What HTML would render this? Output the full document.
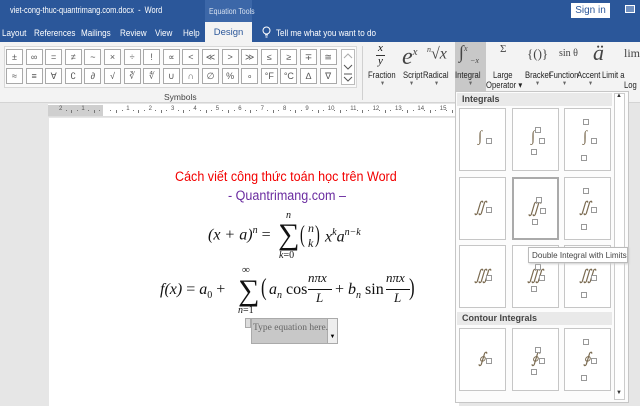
<!DOCTYPE html>
<html><head><meta charset="utf-8"><style>
*{margin:0;padding:0;box-sizing:border-box}
body{width:640px;height:406px;overflow:hidden;position:relative;font-family:"Liberation Sans",sans-serif;background:#e6e6e6}
.a{position:absolute;white-space:nowrap}
.n{transform:scaleX(.82);transform-origin:left top}
.sb{position:absolute;width:17px;height:16px;background:#fff;border:1px solid #a9a9a9;font-size:9px;color:#555;text-align:center;line-height:14px}
.m{font-family:"Liberation Serif","DejaVu Serif",serif;font-style:italic;color:#111;position:absolute;white-space:nowrap}
.r{font-style:normal}
.tile{position:absolute;width:47px;height:63px;background:#fff;border:1px solid #c6c6c6}
.tile span{position:absolute;font-family:"Liberation Serif",serif;font-style:italic;color:#7a6a50;font-size:15px}
.bx{position:absolute;width:6px;height:6px;border:1px solid #999;background:#fff}
.rb{position:absolute;font-size:9px;color:#222;white-space:nowrap;transform:scaleX(.85);transform-origin:left top}
.tb{position:absolute;top:28px;font-size:9px;color:#fff;transform:scaleX(.9);transform-origin:left top}
</style></head><body>
<div class="a" style="left:0;top:0;width:640px;height:42px;background:#2b579a"></div>
<div class="a" style="left:205px;top:0;width:47px;height:22px;background:#3c67a8"></div>
<div class="a n" style="left:10px;top:5px;font-size:9.5px;color:#fff;transform:scaleX(.78)">viet-cong-thuc-quantrimang.com.docx &nbsp;-&nbsp; Word</div>
<div class="a n" style="left:209px;top:6px;font-size:8.5px;color:#d6e0ef">Equation Tools</div>
<div class="a" style="left:571px;top:3px;width:39px;height:15px;background:#fff;color:#2b579a;font-size:10px;text-align:center;line-height:15px">Sign in</div>
<div class="a" style="left:625px;top:5px;width:10px;height:8px;border:1px solid #fff;background:#6f8fc0"></div>
<div class="tb" style="left:2px">Layout</div>
<div class="tb" style="left:34px">References</div>
<div class="tb" style="left:81px">Mailings</div>
<div class="tb" style="left:120px">Review</div>
<div class="tb" style="left:155px">View</div>
<div class="tb" style="left:183px">Help</div>
<div class="a" style="left:205px;top:22px;width:47px;height:21px;background:#f3f3f3;color:#2b579a;font-size:9.5px;text-align:center;line-height:21px">Design</div>
<svg class="a" style="left:262px;top:26px" width="9" height="12"><circle cx="4.5" cy="4.5" r="3.5" fill="none" stroke="#fff"/><path d="M3 9h3M3.5 11h2" stroke="#fff"/></svg>
<div class="tb" style="left:276px">Tell me what you want to do</div>
<div class="a" style="left:0;top:42px;width:640px;height:61px;background:#f3f3f3;border-bottom:1px solid #d4d4d4"></div>
<div class="a" style="left:4px;top:46px;width:353px;height:42px;border:1px solid #d8d8d8;background:#fafafa"></div>
<div id="sym"></div>
<div class="a" style="left:341px;top:49px;width:14px;height:36px;border:1px solid #bbb;background:#fff"></div>
<svg class="a" style="left:342px;top:50px" width="12" height="34"><path d="M2 8l4-4 4 4" fill="none" stroke="#aaa"/><path d="M2 15l4 4 4-4" fill="none" stroke="#555"/><path d="M2 24h8M2 27l4 4 4-4" fill="none" stroke="#555"/></svg>
<div class="a" style="left:164px;top:92px;font-size:8.5px;color:#444">Symbols</div>
<div class="a" style="left:362px;top:46px;width:1px;height:54px;background:#d0d0d0"></div>
<div class="a" style="left:455px;top:42px;width:31px;height:52px;background:#c8c8c8"></div>
<div class="m" style="left:378px;top:42px;font-size:11px">x</div>
<div class="a" style="left:376px;top:55px;width:9px;height:1px;background:#333"></div>
<div class="m" style="left:378px;top:55px;font-size:11px">y</div>
<div class="m" style="left:402px;top:40px;font-size:24px;color:#444;line-height:24px">e<sup style="font-size:11px">x</sup></div>
<div class="m" style="left:427px;top:45px;font-size:16px;color:#444"><sup style="font-size:8px">n</sup>√x</div>
<div class="m" style="left:459px;top:42px;font-size:18px;color:#444">∫<sup style="font-size:8px">x</sup></div>
<div class="m" style="left:470px;top:56px;font-size:8px;color:#444">−x</div>
<div class="m r" style="left:500px;top:43px;font-size:11px;color:#444">Σ</div>
<div class="m r" style="left:527px;top:46px;font-size:13px;color:#444">{()}</div>
<div class="m r" style="left:559px;top:48px;font-size:10px;color:#444">sin θ</div>
<div class="m" style="left:593px;top:40px;font-size:22px;color:#444">ä</div>
<div class="m r" style="left:624px;top:46px;font-size:12px;color:#444">lim</div>
<div class="rb" style="left:368px;top:70px">Fraction</div>
<div class="rb" style="left:403px;top:70px">Script</div>
<div class="rb" style="left:423px;top:70px">Radical</div>
<div class="rb" style="left:455px;top:70px">Integral</div>
<div class="rb" style="left:493px;top:70px">Large</div>
<div class="rb" style="left:486px;top:80px">Operator ▾</div>
<div class="rb" style="left:525px;top:70px">Bracket</div>
<div class="rb" style="left:549px;top:70px">Function</div>
<div class="rb" style="left:577px;top:70px">Accent</div>
<div class="rb" style="left:602px;top:70px">Limit a</div>
<div class="rb" style="left:624px;top:80px">Log</div>
<div class="rb" style="left:380px;top:81px;color:#666;font-size:6px">▼</div>
<div class="rb" style="left:409px;top:81px;color:#666;font-size:6px">▼</div>
<div class="rb" style="left:434px;top:81px;color:#666;font-size:6px">▼</div>
<div class="rb" style="left:468px;top:81px;color:#666;font-size:6px">▼</div>
<div class="rb" style="left:535px;top:81px;color:#666;font-size:6px">▼</div>
<div class="rb" style="left:562px;top:81px;color:#666;font-size:6px">▼</div>
<div class="rb" style="left:588px;top:81px;color:#666;font-size:6px">▼</div>
<div class="a" style="left:48px;top:104px;width:410px;height:13px;background:#fff;border-bottom:1px solid #ddd"></div>
<div class="a" style="left:48px;top:105px;width:55px;height:11px;background:#cfcfcf"></div>
<div id="ruler"></div>
<div class="a" style="left:49px;top:118px;width:410px;height:288px;background:#fff"></div>
<div class="a" style="left:175px;top:169px;font-size:13.5px;color:#f20000;transform:scaleX(.93);transform-origin:left top">Cách viết công thức toán học trên Word</div>
<div class="a" style="left:228px;top:188px;font-size:13.5px;color:#6a2ca0;transform:scaleX(.93);transform-origin:left top">- Quantrimang.com –</div>
<div class="m" style="left:208px;top:225px;font-size:16px">(x + a)<sup style="font-size:10px">n</sup> <span class="r">=</span></div>
<div class="m r" style="left:278px;top:218px;font-size:30px;line-height:34px">∑</div>
<div class="m" style="left:286px;top:210px;font-size:10px">n</div>
<div class="m" style="left:279px;top:250px;font-size:10px">k<span class="r">=0</span></div>
<div class="m r" style="left:300px;top:222px;font-size:24px;transform:scaleX(.6);transform-origin:left">(</div>
<div class="m r" style="left:315px;top:222px;font-size:24px;transform:scaleX(.6);transform-origin:left">)</div>
<div class="m" style="left:308px;top:221px;font-size:12px">n</div>
<div class="m" style="left:308px;top:236px;font-size:12px">k</div>
<div class="m" style="left:325px;top:227px;font-size:16px">x<sup style="font-size:10px">k</sup>a<sup style="font-size:10px">n−k</sup></div>
<div class="m" style="left:160px;top:281px;font-size:16px">f(x) <span class="r">=</span> a<sub style="font-size:10px" class="r">0</sub> <span class="r">+</span></div>
<div class="m r" style="left:238px;top:274px;font-size:30px;line-height:34px">∑</div>
<div class="m r" style="left:242px;top:264px;font-size:11px">∞</div>
<div class="m" style="left:238px;top:305px;font-size:10px">n<span class="r">=1</span></div>
<div class="m r" style="left:261px;top:275px;font-size:24px;transform:scaleX(.7);transform-origin:left">(</div>
<div class="m" style="left:269px;top:281px;font-size:16px">a<sub style="font-size:10px">n</sub> <span class="r">cos</span></div>
<div class="m" style="left:308px;top:270px;font-size:13px">nπx</div>
<div class="a" style="left:308px;top:289px;width:24px;height:1px;background:#111"></div>
<div class="m" style="left:316px;top:290px;font-size:13px">L</div>
<div class="m" style="left:335px;top:281px;font-size:16px"><span class="r">+</span> b<sub style="font-size:10px">n</sub> <span class="r">sin</span></div>
<div class="m" style="left:386px;top:270px;font-size:13px">nπx</div>
<div class="a" style="left:386px;top:289px;width:24px;height:1px;background:#111"></div>
<div class="m" style="left:394px;top:290px;font-size:13px">L</div>
<div class="m r" style="left:409px;top:275px;font-size:24px;transform:scaleX(.7);transform-origin:left">)</div>
<div class="a" style="left:245px;top:318px;width:6px;height:10px;background:#ddd;border:1px solid #aaa"></div>
<div class="a" style="left:251px;top:318px;width:87px;height:26px;background:#c8c8c8;border:1px solid #aaa"></div>
<div class="a" style="left:327px;top:319px;width:10px;height:24px;background:#eee;border-left:1px solid #aaa;font-size:6px;text-align:center;padding-top:15px">▼</div>
<div class="a" style="left:253px;top:323px;font-family:'Liberation Serif',serif;font-size:9.5px;color:#666">Type equation here.</div>
<div class="a" style="left:455px;top:91px;width:174px;height:312px;background:#fcfcfc;border:1px solid #c6c6c6"></div>
<div class="a" style="left:457px;top:93px;width:155px;height:13px;background:#e9e9e9;font-size:9px;font-weight:bold;color:#444;padding-left:5px;line-height:13px">Integrals</div>
<div class="a" style="left:457px;top:312px;width:155px;height:13px;background:#e9e9e9;font-size:9px;font-weight:bold;color:#444;padding-left:5px;line-height:13px">Contour Integrals</div>
<div class="a" style="left:614px;top:93px;width:11px;height:307px;background:#fff;border:1px solid #ccc"></div>
<div class="a" style="left:616px;top:93px;font-size:6px;color:#333">▲</div>
<div class="a" style="left:616px;top:390px;font-size:6px;color:#333">▼</div>
<div id="tiles"></div>
<div class="a" style="left:528px;top:247px;width:100px;height:16px;background:#fff;border:1px solid #bbb;font-size:8.5px;color:#444;line-height:14px;padding-left:3px;box-shadow:1px 1px 2px #ccc"><span style="display:inline-block;transform:scaleX(.95);transform-origin:left">Double Integral with Limits</span></div>
<script>
var s1="± ∞ = ≠ ~ × ÷ ! ∝ < ≪ > ≫ ≤ ≥ ∓ ≅".split(" "),s2="≈ ≡ ∀ ∁ ∂ √ ∛ ∜ ∪ ∩ ∅ % ∘ °F °C ∆ ∇".split(" ");
var h="";for(var i=0;i<17;i++){var x=6+i*19.6;if(x>322)break;h+='<div class="sb" style="left:'+x+'px;top:49px">'+s1[i]+'</div><div class="sb" style="left:'+x+'px;top:68px">'+s2[i]+'</div>';}
document.getElementById("sym").innerHTML=h;
var rl="";var lab=["2","1","","1","2","3","4","5","6","7","8","9","10","11","12","13","14","15"];
for(var k=0;k<18;k++){var x=59+k*22.4;rl+='<div class="a" style="left:'+x+'px;top:106px;font-size:6px;color:#555">'+lab[k]+'</div>';for(var d=1;d<4;d++)rl+='<div class="a" style="left:'+(x+d*5.6+1)+'px;top:110px;width:1px;height:'+(d==2?3:1)+'px;background:#777"></div>';}
document.getElementById("ruler").innerHTML=rl;
var xs=[459,512,564],ys=[108,177,245,328],g=["∫","∬","∭","∮"],t="";
for(var r=0;r<4;r++)for(var c=0;c<3;c++){var x=xs[c],y=ys[r];var st=(r==1&&c==1)?'border:2px solid #aaa;':'';
t+='<div class="tile" style="left:'+x+'px;top:'+y+'px;'+st+'"><span style="left:'+(r==0||r==3?18:14)+'px;top:20px">'+g[r]+'</span><div class="bx" style="left:26px;top:29px"></div>';
if(c==1)t+='<div class="bx" style="left:22px;top:18px"></div><div class="bx" style="left:18px;top:40px"></div>';
if(c==2)t+='<div class="bx" style="left:18px;top:10px"></div><div class="bx" style="left:16px;top:46px"></div>';
t+='</div>';}
document.getElementById("tiles").innerHTML=t;
</script>
</body></html>
